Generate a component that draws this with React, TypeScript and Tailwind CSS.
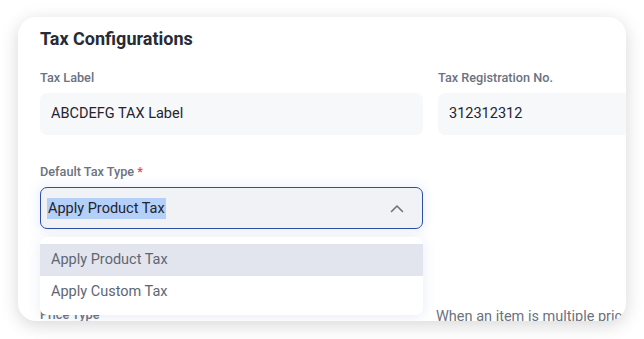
import React from "react";

export default function App() {
  return (
    <div
      className="w-[644px] h-[339px] bg-white pl-[18px] pt-[17px]"
      style={{ fontFamily: "Roboto, 'Liberation Sans', sans-serif" }}
    >
      <div className="relative w-[608px] h-[304px] rounded-[18px] bg-white overflow-hidden shadow-[0_4px_18px_rgba(0,0,0,0.16)]">
        <div className="w-[820px] pl-[22px] pt-[10px]">
          <h2 className="text-[18px] leading-[24px] font-bold text-[#262b35]">Tax Configurations</h2>

          <div className="mt-[18px] grid grid-cols-[383px_383px] gap-x-[15px]">
            <div>
              <div className="text-[12.7px] leading-[17px] font-medium text-[#6b7280]">Tax Label</div>
              <div className="mt-[7px] h-[42px] rounded-[7px] bg-[#f7f8fa] flex items-center px-[11px] text-[14.5px] text-[#1f2430]">
                ABCDEFG TAX Label
              </div>
            </div>
            <div>
              <div className="text-[12.7px] leading-[17px] font-medium text-[#6b7280]">Tax Registration No.</div>
              <div className="mt-[7px] h-[42px] rounded-[7px] bg-[#f7f8fa] flex items-center px-[11px] text-[14.5px] text-[#1f2430]">
                312312312
              </div>
            </div>
          </div>

          <div className="mt-[28px] grid grid-cols-[383px_383px] gap-x-[13px]">
            <div className="relative">
              <div className="text-[12.7px] leading-[17px] font-medium text-[#6b7280]">
                Default Tax Type <span className="text-[#ef4444]">*</span>
              </div>
              <div className="mt-[7px] h-[42px] rounded-[7px] border border-[#2c4ea6] bg-[#f1f2f6] flex items-center justify-between pl-[6px] pr-[18px] shadow-[0_0_10px_4px_rgba(80,120,230,0.08)]">
                <span className="bg-[#b4cff8] text-[14.5px] leading-[21px] text-[#1f2430] px-[1px]">Apply Product Tax</span>
                <svg width="14" height="9" viewBox="0 0 14 9" fill="none">
                  <path d="M1.5 7.5L7 2L12.5 7.5" stroke="#6b7280" strokeWidth="1.6" strokeLinecap="round" strokeLinejoin="round" />
                </svg>
              </div>
              <div className="mt-[77px] text-[12.7px] leading-[17px] font-medium text-[#6b7280]">Price Type</div>

              <div className="absolute left-0 top-[74px] w-[383px] rounded-[7px] bg-white pt-[7px] pb-[8px] shadow-[0_2px_14px_rgba(70,100,200,0.12)]">
                <div className="h-[32px] bg-[#e2e5ee] flex items-center px-[11px] text-[14.5px] text-[#5f6673]">Apply Product Tax</div>
                <div className="h-[31px] flex items-center px-[11px] text-[14.5px] text-[#5f6673]">Apply Custom Tax</div>
              </div>
            </div>
            <div className="flex flex-col justify-end">
              <div className="text-[14.5px] leading-[18px] text-[#6b7280] -mb-[3px] whitespace-nowrap">
                When an item is multiple price levels, the tax will be applied
              </div>
            </div>
          </div>
        </div>
      </div>
    </div>
  );
}
